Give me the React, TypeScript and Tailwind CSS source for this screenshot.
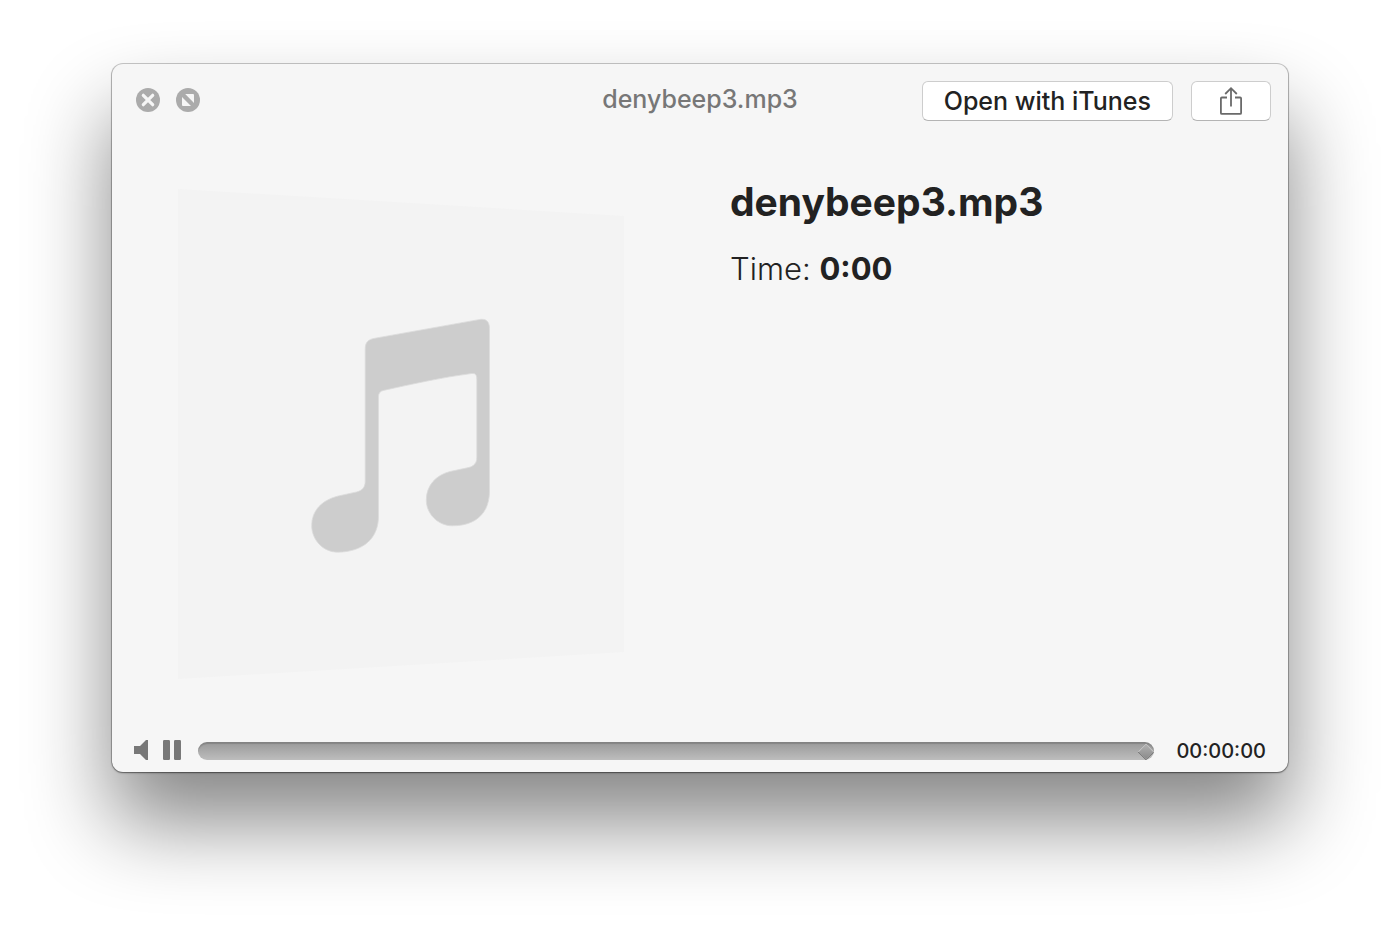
import React, { useState } from 'react';

const CloseIcon = () => (
    <svg viewBox="0 0 24 24" className="w-6 h-6" aria-hidden="true">
        <circle cx="12" cy="12" r="12" fill="#ababab" />
        <path d="M7.3 7.3 16.7 16.7M16.7 7.3 7.3 16.7" stroke="#f6f6f6" strokeWidth="3.2" strokeLinecap="round" />
    </svg>
);

const ExpandIcon = () => (
    <svg viewBox="0 0 24 24" className="w-6 h-6" aria-hidden="true">
        <circle cx="12" cy="12" r="12" fill="#ababab" />
        <path d="M9.2 6H17a1 1 0 0 1 1 1v8zM6 9l9 9H7a1 1 0 0 1-1-1z" fill="#f6f6f6" />
    </svg>
);

const ShareIcon = () => (
    <svg viewBox="0 0 24 30" className="w-6 h-[30px]" fill="none" stroke="#6a6a6a" strokeWidth="1.8" aria-hidden="true">
        <path d="M8 11.5H2.9a1 1 0 0 0-1 1v14.4a1 1 0 0 0 1 1h18.2a1 1 0 0 0 1-1V12.500a1 1 0 0 0-1-1H16" />
        <path d="M12 20.5V2.2M6.200 8 12 2.200 17.800 8" />
    </svg>
);

const SpeakerIcon = () => (
    <svg viewBox="0 0 15 20" className="w-[15px] h-5" fill="#787878" aria-hidden="true">
        <path d="M0 6h6l6-6h2v20h-2l-6-6H0z" />
    </svg>
);

const PauseIcon = () => (
    <svg viewBox="0 0 18 20" className="w-[18px] h-5" fill="#787878" aria-hidden="true">
        <rect width="7" height="20" rx="1.2" />
        <rect x="11" width="7" height="20" rx="1.2" />
    </svg>
);

/** Placeholder cover: a sheet tilted in perspective with a beamed note on it. */
const Artwork = () => (
    <svg viewBox="0 0 446 490" className="w-full" role="img" aria-label="Artwork">
        <path d="M0 0 446 27V463L0 490z" fill="#f3f3f3" />
        <path
            d="M187.200 160C187.200 153 190.500 150.200 197 149.200L302 130.400C308 129.500 311.500 132.500 311.500 139.500V302C311.500 324 298 336.800 274.300 336.800C260 336.800 248.300 325 248.300 311C248.300 296.500 258 286 272 282.500L290.300 278.600C296 277.300 298.800 274 298.800 268.500V190.500C298.800 186 297.500 184.100 293.700 184.500C264 188.300 235 195 205.500 201.400C202.300 202 200.500 204 200.500 207.500V327C200.500 349 186 362.800 159.700 363.200C145 363.200 133.700 350.800 133.700 336.500C133.700 321.500 144 311 160.300 307L178.700 302.900C184.500 301.500 187.200 298 187.200 292z"
            fill="#cdcdcd"
            stroke="#dcdcdc"
            strokeWidth="0.8"
        />
    </svg>
);

export default function App() {
    const [position, setPosition] = useState(100);

    return (
        <div className="min-h-screen bg-white px-28 pt-16 pb-40 overflow-hidden font-['Inter','Liberation_Sans',sans-serif] text-[#222222]">
            <main className="rounded-[11px] bg-[#f6f6f6] shadow-[0_0_0_1px_rgba(0,0,0,0.2),0_1px_2px_rgba(0,0,0,0.4),0_50px_84px_rgba(0,0,0,0.48)]">
                {/* Title bar */}
                <header className="grid grid-cols-[1fr_auto_1fr] items-center px-[17px] pt-[17px]">
                    <div className="flex gap-4 pl-[7px] pb-0.5">
                        <button type="button" aria-label="Close"><CloseIcon /></button>
                        <button type="button" aria-label="Full screen"><ExpandIcon /></button>
                    </div>
                    <h1 className="text-[25px] leading-9 pb-1 font-medium text-[#777777]">denybeep3.mp3</h1>
                    <div className="flex justify-end gap-[18px]">
                        <button type="button" className="h-10 px-[21px] rounded-md bg-white border border-[#cdcdcd] border-b-[#b4b4b4] text-[25px] leading-9 font-medium whitespace-nowrap">
                            Open with iTunes
                        </button>
                        <button type="button" aria-label="Share" className="flex items-center justify-center w-20 h-10 rounded-md bg-white border border-[#cdcdcd] border-b-[#b4b4b4]">
                            <ShareIcon />
                        </button>
                    </div>
                </header>

                {/* Preview */}
                <section className="grid grid-cols-[446fr_558fr] gap-[106px] pl-[66px] pt-[68px]">
                    <Artwork />
                    <div className="-mt-3">
                        <h2 className="text-[39px] leading-[50px] font-bold">denybeep3.mp3</h2>
                        <p className="mt-[22px] text-[31px] leading-10 font-light">
                            Time: <strong className="font-bold">0:00</strong>
                        </p>
                    </div>
                </section>

                {/* Playback controls */}
                <footer className="flex items-center px-[22px] pt-[58px] pb-[7px]">
                    <div className="flex gap-3.5 pb-0.5">
                        <button type="button" aria-label="Mute"><SpeakerIcon /></button>
                        <button type="button" aria-label="Pause"><PauseIcon /></button>
                    </div>
                    <input
                        type="range"
                        aria-label="Position"
                        min={0}
                        max={100}
                        value={position}
                        onChange={e => setPosition(Number(e.target.value))}
                        className="ml-[17px] flex-1 min-w-0 h-[18px] pt-0.5 pr-0.5 appearance-none overflow-hidden rounded-full bg-linear-to-b from-[#999999] to-[#bdbdbd] shadow-[inset_0_2px_1px_rgba(0,0,0,0.15)] [&::-webkit-slider-thumb]:appearance-none [&::-webkit-slider-thumb]:w-3 [&::-webkit-slider-thumb]:h-3 [&::-webkit-slider-thumb]:rotate-45 [&::-webkit-slider-thumb]:rounded-[1px] [&::-webkit-slider-thumb]:border [&::-webkit-slider-thumb]:border-[#c9c9c9] [&::-webkit-slider-thumb]:border-r-[#6d6d6d] [&::-webkit-slider-thumb]:border-b-[#6d6d6d] [&::-webkit-slider-thumb]:bg-linear-to-br [&::-webkit-slider-thumb]:from-[#b0b0b0] [&::-webkit-slider-thumb]:to-[#8a8a8a]"
                    />
                    <time className="ml-[22px] text-xl leading-7 font-medium">00:00:00</time>
                </footer>
            </main>
        </div>
    );
}
